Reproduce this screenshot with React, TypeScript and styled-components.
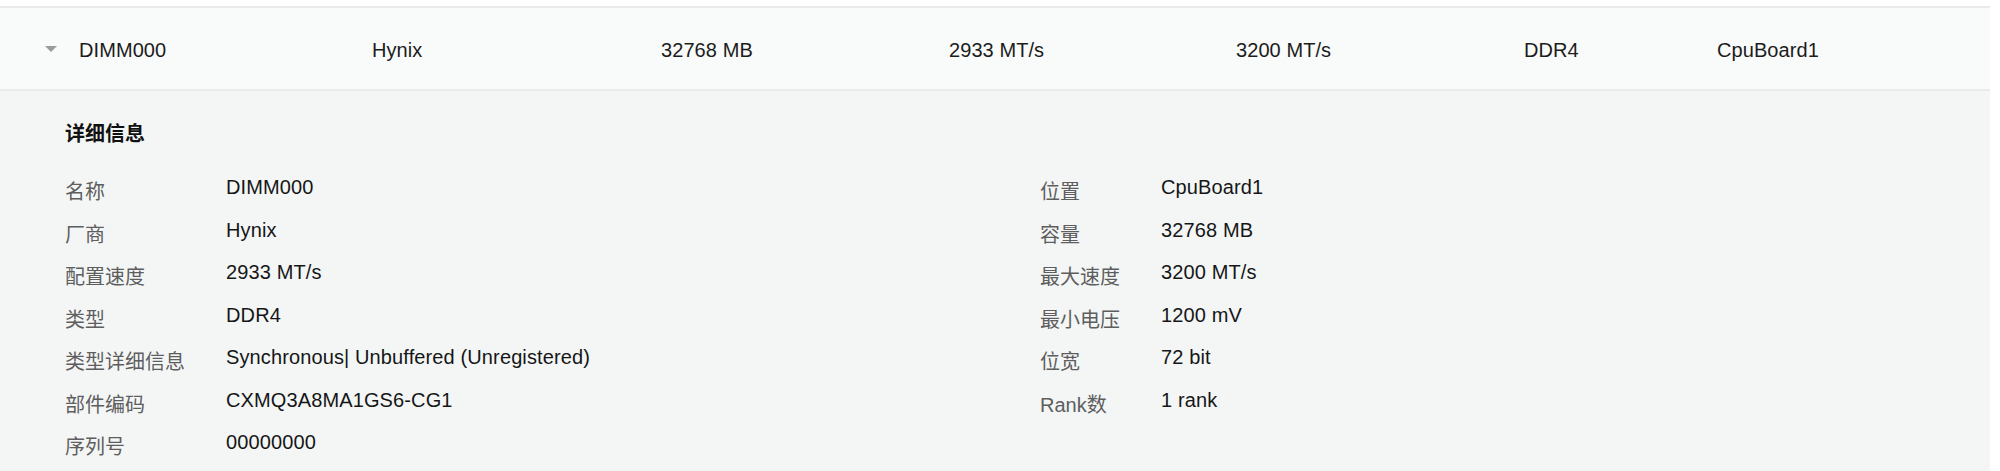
import React from "react";
import styled, { createGlobalStyle } from "styled-components";

const GlobalStyle = createGlobalStyle`
  html, body {
    margin: 0;
    padding: 0;
    background: #ffffff;
  }
  body {
    font-family: "Liberation Sans", "Noto Sans CJK SC", sans-serif;
    overflow: hidden;
  }
`;

type Memory = {
  locator: string;
  manufacturer: string;
  size: string;
  configuredSpeed: string;
  maxSpeed: string;
  type: string;
  bank: string;
  typeDetail: string;
  partNumber: string;
  serial: string;
  minVoltage: string;
  width: string;
  rank: string;
};

const dimm: Memory = {
  locator: "DIMM000",
  manufacturer: "Hynix",
  size: "32768 MB",
  configuredSpeed: "2933 MT/s",
  maxSpeed: "3200 MT/s",
  type: "DDR4",
  bank: "CpuBoard1",
  typeDetail: "Synchronous| Unbuffered (Unregistered)",
  partNumber: "CXMQ3A8MA1GS6-CG1",
  serial: "00000000",
  minVoltage: "1200 mV",
  width: "72 bit",
  rank: "1 rank",
};

const Table = styled.div`
  width: 1990px;
  padding-top: 6px;
  font-family: "Liberation Sans", "Noto Sans CJK SC", sans-serif;
`;

const Row = styled.div`
  display: grid;
  grid-template-columns: 356px 289px 288px 287px 288px 193px 289px;
  height: 81px;
  background: #f9fafa;
  border-top: 2px solid #e9ebeb;
  border-bottom: 2px solid #e9ebeb;
`;

const Cell = styled.div<{ $lead?: boolean }>`
  display: flex;
  align-items: flex-start;
  gap: 22px;
  padding: 31px 0 0 ${(p) => (p.$lead ? "45px" : "16px")};
  font-size: 20px;
  line-height: normal;
  letter-spacing: 0.08px;
  color: #1c1c1c;
  white-space: nowrap;
`;

const Caret = styled.svg`
  flex: none;
  margin-top: 7px;
`;

const Detail = styled.div`
  background: #f4f6f6;
  padding: 27px 0 20px 65px;
`;

const Title = styled.div`
  font-size: 20px;
  font-weight: bold;
  line-height: normal;
  color: #111111;
  margin-bottom: 29px;
`;

const Columns = styled.div`
  display: grid;
  grid-template-columns: 975px 1fr;
  align-items: start;
`;

const Pairs = styled.dl`
  display: grid;
  grid-template-columns: max-content 1fr;
  grid-auto-rows: 42.5px;
  column-gap: 41px;
  margin: 0;
`;

const Label = styled.dt`
  font-size: 20px;
  line-height: normal;
  color: #5e5e5e;
  white-space: nowrap;
`;

const Value = styled.dd`
  margin: 0;
  font-size: 20px;
  line-height: normal;
  letter-spacing: 0.12px;
  color: #161616;
  white-space: nowrap;
`;

const leftPairs: [string, string][] = [
  ["名称", dimm.locator],
  ["厂商", dimm.manufacturer],
  ["配置速度", dimm.configuredSpeed],
  ["类型", dimm.type],
  ["类型详细信息", dimm.typeDetail],
  ["部件编码", dimm.partNumber],
  ["序列号", dimm.serial],
];

const rightPairs: [string, string][] = [
  ["位置", dimm.bank],
  ["容量", dimm.size],
  ["最大速度", dimm.maxSpeed],
  ["最小电压", dimm.minVoltage],
  ["位宽", dimm.width],
  ["Rank数", dimm.rank],
];

function PairList({ items }: { items: [string, string][] }) {
  return (
    <Pairs>
      {items.map(([k, v]) => (
        <React.Fragment key={k}>
          <Label>{k}</Label>
          <Value>{v}</Value>
        </React.Fragment>
      ))}
    </Pairs>
  );
}

export default function App() {
  return (
    <>
      <GlobalStyle />
      <Table>
        <Row>
          <Cell $lead>
            <Caret width="12" height="6" viewBox="0 0 12 6">
              <path d="M0 0 L12 0 L6 6 Z" fill="#9b9b9b" />
            </Caret>
            {dimm.locator}
          </Cell>
          <Cell>{dimm.manufacturer}</Cell>
          <Cell>{dimm.size}</Cell>
          <Cell>{dimm.configuredSpeed}</Cell>
          <Cell>{dimm.maxSpeed}</Cell>
          <Cell>{dimm.type}</Cell>
          <Cell>{dimm.bank}</Cell>
        </Row>
        <Detail>
          <Title>详细信息</Title>
          <Columns>
            <PairList items={leftPairs} />
            <PairList items={rightPairs} />
          </Columns>
        </Detail>
      </Table>
    </>
  );
}
